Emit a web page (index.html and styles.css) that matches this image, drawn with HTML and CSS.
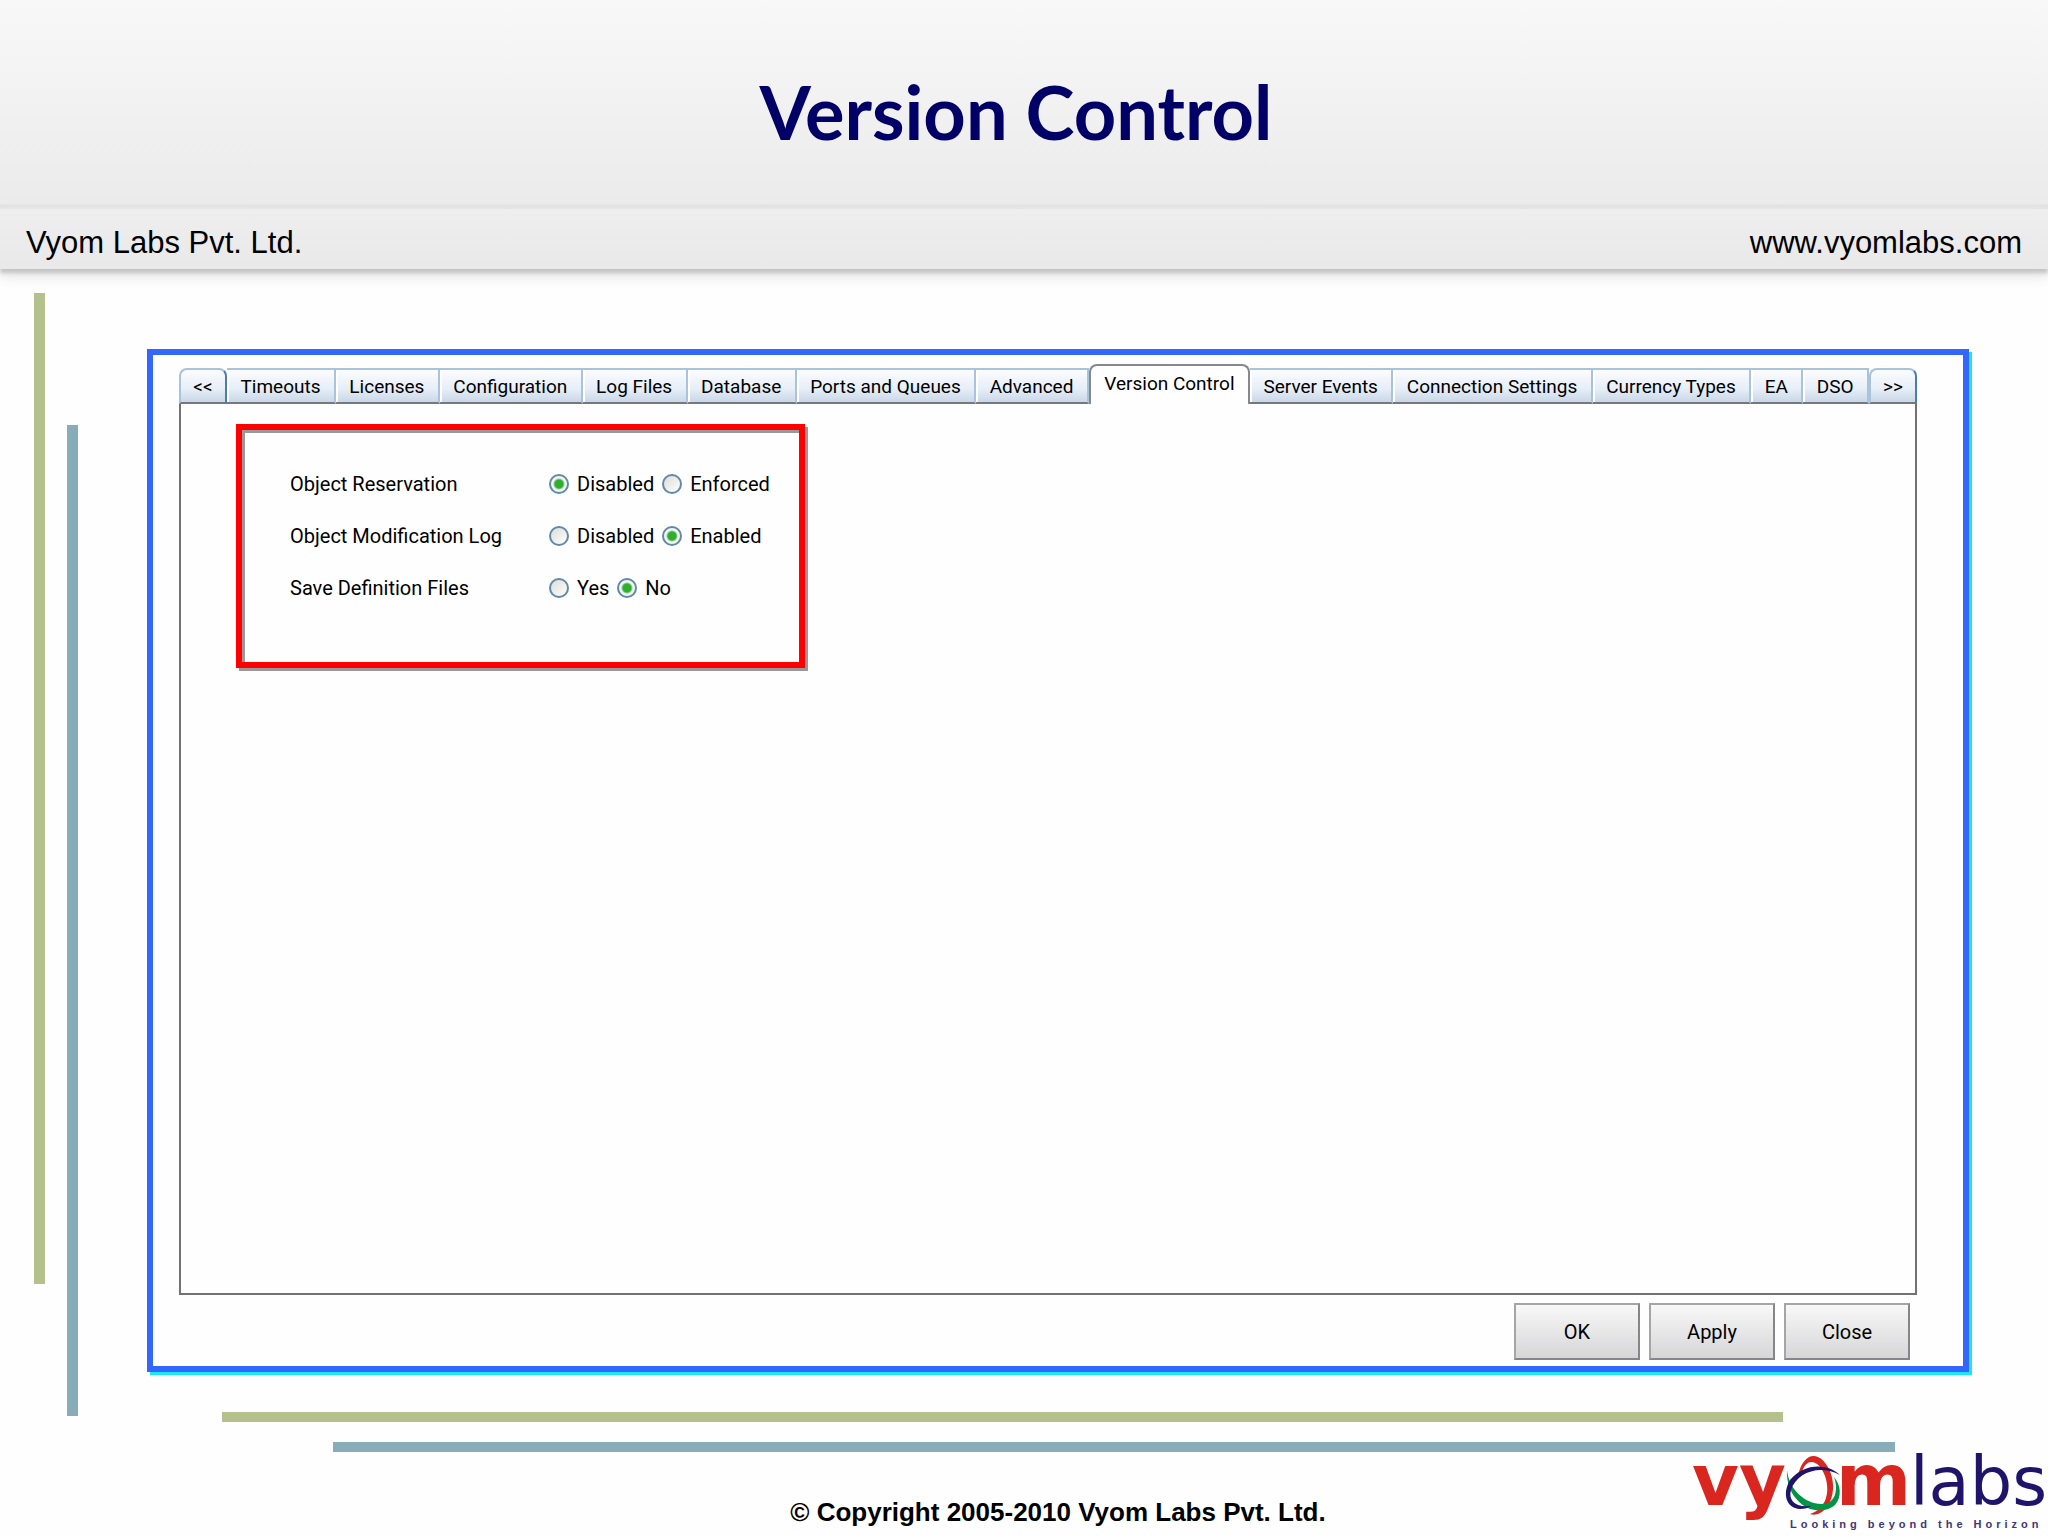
FILE: index.html
```html
<!DOCTYPE html>
<html lang="en">
  <head>
    <meta charset="UTF-8" />
    <meta name="viewport" content="width=device-width, initial-scale=1.0" />
    <title>Version Control</title>
    <link rel="stylesheet" href="styles.css">
  </head>
  <body>
    <header class="title-bar">
      <h1>Version Control</h1>
    </header>
    <div class="company-bar">
      <span>Vyom Labs Pvt. Ltd.</span>
      <span>www.vyomlabs.com</span>
    </div>

    <main class="stage">
      <div class="rail rail-green"></div>
      <div class="rail rail-teal"></div>

      <div class="content">
        <form class="window">
          <div class="tabs" role="tablist">
            <button type="button" class="tab tab-scroll">&lt;&lt;</button>
            <button type="button" class="tab" role="tab">Timeouts</button>
            <button type="button" class="tab" role="tab">Licenses</button>
            <button type="button" class="tab" role="tab">Configuration</button>
            <button type="button" class="tab" role="tab">Log Files</button>
            <button type="button" class="tab" role="tab">Database</button>
            <button type="button" class="tab" role="tab">Ports and Queues</button>
            <button type="button" class="tab" role="tab">Advanced</button>
            <button type="button" class="tab active" role="tab" aria-selected="true">Version Control</button>
            <button type="button" class="tab" role="tab">Server Events</button>
            <button type="button" class="tab" role="tab">Connection Settings</button>
            <button type="button" class="tab" role="tab">Currency Types</button>
            <button type="button" class="tab" role="tab">EA</button>
            <button type="button" class="tab" role="tab">DSO</button>
            <button type="button" class="tab tab-scroll">&gt;&gt;</button>
          </div>

          <div class="panel" role="tabpanel">
            <div class="highlight">
              <div class="option-row" role="radiogroup" aria-labelledby="reservation">
                <span class="option-name" id="reservation">Object Reservation</span>
                <label><input type="radio" name="reservation" checked />Disabled</label>
                <label><input type="radio" name="reservation" />Enforced</label>
              </div>
              <div class="option-row" role="radiogroup" aria-labelledby="modlog">
                <span class="option-name" id="modlog">Object Modification Log</span>
                <label><input type="radio" name="modlog" />Disabled</label>
                <label><input type="radio" name="modlog" checked />Enabled</label>
              </div>
              <div class="option-row" role="radiogroup" aria-labelledby="savedef">
                <span class="option-name" id="savedef">Save Definition Files</span>
                <label><input type="radio" name="savedef" />Yes</label>
                <label><input type="radio" name="savedef" checked />No</label>
              </div>
            </div>
          </div>

          <div class="actions">
            <button type="button">OK</button>
            <button type="button">Apply</button>
            <button type="button">Close</button>
          </div>
        </form>

        <div class="line line-green"></div>
        <div class="line line-teal"></div>
      </div>
    </main>

    <footer>
      <p class="copyright">© Copyright 2005-2010 Vyom Labs Pvt. Ltd.</p>
      <svg class="logo" viewBox="0 -16 360 100" role="img" aria-label="vyomlabs">
        <text class="logo-bold" x="4" y="53">v</text>
        <text class="logo-bold" x="51" y="53">y</text>
        <text class="logo-bold" x="148" y="53">m</text>
        <text class="logo-thin" x="222" y="53">labs</text>
        <!-- orbit rings that stand in for the letter o -->
        <path fill="#d9261f" d="M110 24C113 8 122 1 130 5C145 12 153 45 134 60Q128 64 122 62C137 57 143 42 137 24C131 7 118 5 114 20Z" />
        <path fill="#009444" d="M99 18C98 34 106 50 122 57Q138 61 147 53C154 45 153 33 146 25C150 36 148 47 140 51C122 56 101 40 99 18Z" />
        <path fill="#1f1469" d="M152 23C138 10 115 12 102 28C94 42 98 56 112 57Q119 57 123 54C107 56 100 48 103 38C109 20 132 12 152 23Z" />
        <text class="logo-tagline" x="102" y="76">Looking beyond the Horizon</text>
      </svg>
    </footer>
  </body>
</html>
```
FILE: styles.css
```css
* {
  margin: 0;
  padding: 0;
  box-sizing: border-box;
}

body {
  display: flex;
  flex-direction: column;
  min-height: 100vh;
  background-color: #fefefe;
  color: #000;
  font-family: "Liberation Sans", Arial, sans-serif;
}

button,
input {
  font: inherit;
  color: inherit;
}

/* Header */
.title-bar {
  height: 209px;
  padding: 68px 16px 0 0;
  text-align: center;
  background: linear-gradient(#f8f8f8, #ebebeb 204px, #e2e2e2 205px, #e6e6e6);
}

h1 {
  color: #000066;
  font-family: Lato, sans-serif;
  font-size: 74px;
  font-weight: 700;
  line-height: 88px;
}

.company-bar {
  display: flex;
  justify-content: space-between;
  align-items: center;
  height: 60px;
  padding: 8px 26px 0;
  font-size: 31px;
  line-height: 36px;
  background: linear-gradient(#eeeeee, #e9e9ea);
  box-shadow: 0 4px 4px #c4c4c4, 0 8px 12px #e6e6e6;
}

/* Coloured rails and the screen between them */
.stage {
  flex: 1;
  display: flex;
  padding: 24px 0 0 34px;
}

.rail {
  flex: none;
  width: 11px;
}

.rail-green {
  margin-bottom: 168px;
  background: #b5c18c;
}

.rail-teal {
  margin: 132px 0 36px 22px;
  background: #88adb8;
}

.content {
  flex: 1;
  display: flex;
  flex-direction: column;
  min-width: 0;
  padding: 56px 0 0 69px;
}

.line {
  height: 10px;
}

.line-green {
  margin: 40px 265px 20px 75px;
  background: #b5c18c;
}

.line-teal {
  margin: 0 153px 0 186px;
  background: #88adb8;
}

/* Window */
.window {
  flex: 1;
  display: flex;
  flex-direction: column;
  margin-right: 79px;
  padding: 9px 46px 6px 26px;
  border: 6px solid #3366ff;
  box-shadow: 3px 3px 0 #19e8ff;
  background: #fefefe;
  font-family: Roboto, "Liberation Sans", sans-serif;
  font-size: 20px;
  line-height: 26px;
}

.tabs {
  display: flex;
  align-items: flex-end;
  font-size: 19px;
}

.tab {
  flex: 1 0 auto;
  height: 36px;
  padding: 2px 9px 0;
  border: solid #a9c3da;
  border-width: 2px 2px 2px 0;
  border-bottom-color: #75797f;
  box-shadow: inset 2px 0 0 #fff;
  background: linear-gradient(#fbfcfe, #e6eef7 60%, #c9d7e7);
  white-space: nowrap;
}

.tab-scroll {
  flex: 0 0 48px;
  border-left-width: 2px;
  border-right-color: #4c7cab;
  border-radius: 8px 8px 0 0;
  box-shadow: none;
}

.tab.active {
  height: 40px;
  padding-bottom: 4px;
  border-color: #85898d;
  border-width: 2px 2px 0;
  border-radius: 8px 8px 0 0;
  box-shadow: none;
  background: #fefefe;
}

.panel {
  flex: 1;
  padding: 20px 55px;
  border: 2px solid #727272;
  border-top: 0;
}

.highlight {
  display: flex;
  flex-direction: column;
  gap: 26px;
  width: 569px;
  height: 244px;
  padding: 41px 48px;
  border: 6px solid #ff0000;
  box-shadow: 3px 3px 0 #999, inset 3px 3px 0 #999;
}

.option-row {
  display: flex;
  gap: 8px;
}

.option-name {
  flex: none;
  width: 251px;
}

.option-row label {
  display: flex;
  align-items: center;
  gap: 8px;
}

input[type="radio"] {
  appearance: none;
  width: 20px;
  height: 20px;
  border: 2px solid #6189a8;
  border-radius: 50%;
  background: linear-gradient(135deg, #dcdcd8, #fff);
}

input[type="radio"]:checked {
  background: radial-gradient(circle, #2fae2f 4px, #f4f5f2 6px);
}

.actions {
  display: flex;
  justify-content: flex-end;
  gap: 9px;
  padding: 8px 7px 0 0;
}

.actions button {
  width: 126px;
  height: 57px;
  border: 2px solid;
  border-color: #a5a5a8 #85858a #85858a #a5a5a8;
  background: linear-gradient(#f8f8f8, #d6d6d8);
}

/* Footer */
footer {
  display: grid;
  grid-template-columns: 1fr auto 1fr;
  height: 84px;
  padding-left: 68px;
}

.copyright {
  grid-column: 2;
  padding-top: 45px;
  font-size: 26px;
  font-weight: 700;
  line-height: 30px;
}

.logo {
  justify-self: end;
  width: 360px;
  height: 100px;
  margin-top: -16px;
}

.logo-bold {
  fill: #d9261f;
  font: 700 72px "DejaVu Sans", sans-serif;
}

.logo-thin {
  fill: #1f1469;
  font: 400 67px "DejaVu Sans", sans-serif;
}

.logo-tagline {
  fill: #3d3777;
  font: 700 11px "Liberation Sans", sans-serif;
  letter-spacing: 4px;
}
```
